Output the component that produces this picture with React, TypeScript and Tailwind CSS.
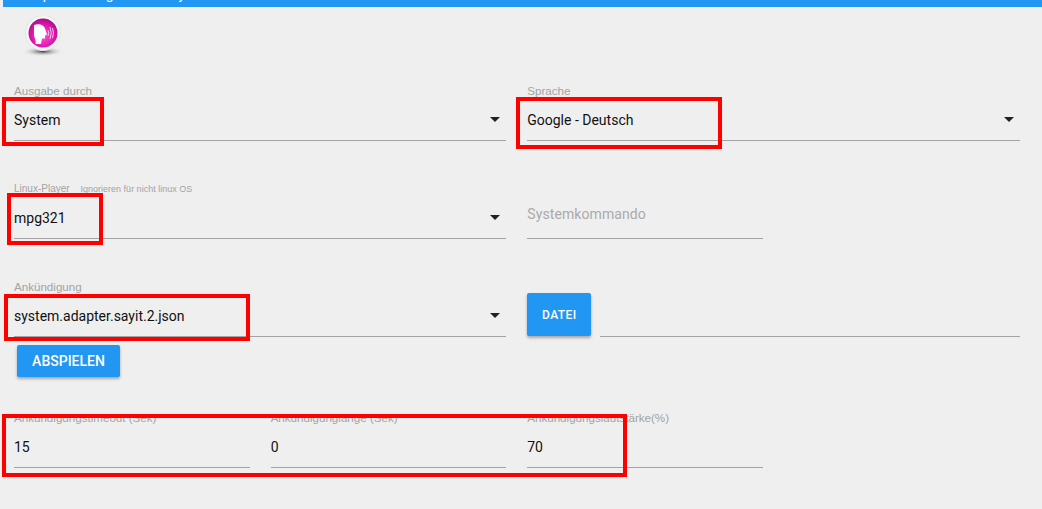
const labelCls = "block font-['Liberation_Sans',sans-serif] text-[11.6px] leading-[14px] text-[#a3a3a3] whitespace-nowrap";

const Field = ({
  label,
  value,
  hint,
  select,
  className = "",
}: {
  label?: string;
  value?: string;
  hint?: string;
  select?: boolean;
  className?: string;
}) => (
  <div className={"relative flex h-[59px] flex-col border-b border-[#a3a3a3] " + className}>
    <div className="flex h-[16px] items-end gap-[11px] pt-[2px]">
      {hint ? (
        <span className="font-['Liberation_Sans',sans-serif] text-[10px] leading-[14px] text-[#a3a3a3] whitespace-nowrap">{label}</span>
      ) : (
        <span className={labelCls}>{label}</span>
      )}
      {hint && <span className="font-['Liberation_Sans',sans-serif] text-[9px] leading-[14px] text-[#a3a3a3] whitespace-nowrap">{hint}</span>}
    </div>
    <div className="pt-[13px] text-[14px] leading-[18px] text-[#111111]">{value}</div>
    {select && (
      <div className="absolute top-[35px] right-[6px] h-0 w-0 border-x-[5px] border-t-[5px] border-x-transparent border-t-[#222222]" />
    )}
  </div>
);

const Logo = () => (
  <svg width="42" height="42" viewBox="0 0 42 42">
    <defs>
      <radialGradient id="ball" cx="50%" cy="60%" r="60%">
        <stop offset="0%" stopColor="#fb5ad0" />
        <stop offset="65%" stopColor="#e015ac" />
        <stop offset="100%" stopColor="#a80c85" />
      </radialGradient>
      <radialGradient id="shadow" cx="50%" cy="50%" r="50%">
        <stop offset="0%" stopColor="#444444" />
        <stop offset="100%" stopColor="#efefef" stopOpacity="0" />
      </radialGradient>
    </defs>
    <ellipse cx="21" cy="35.5" rx="21" ry="5" fill="url(#shadow)" />
    <circle cx="21" cy="17" r="17.5" fill="#f7f7f7" stroke="#e2e2e2" />
    <circle cx="21" cy="17" r="14.5" fill="url(#ball)" />
    <path d="M12 9c5-1.500 10-.5 11.500 5l1.500 4.500-2 1 0 3-3 0-1 5.500-5.500 0c1-4-1.500-6-1.500-10 0-3 0-6 0-9z" fill="#ffffff" />
    <path d="M26 14q1.500 3 0 6M28 11q2.500 6 0 12M30.500 12q2 5 0 10" stroke="#f8c4e8" strokeWidth="1" fill="none" />
  </svg>
);

const App = () => {
  return (
    <div className="relative h-[509px] w-[1042px] overflow-hidden bg-[#efefef] font-['Roboto','Liberation_Sans',sans-serif]">
      <div className="ml-[3px] h-[7px] overflow-hidden bg-[#2196f3]">
        <div className="mt-[-15px] pl-[15px] text-[14px] leading-[18px] text-white">Adapter settings of the sayit</div>
      </div>
      <div className="pl-[22px] pt-[9px]">
        <Logo />
      </div>

      <div className="mt-[24px] grid grid-cols-4 gap-x-[21px] pr-[22.5px] pl-[14px]">
        <Field label="Ausgabe durch" value="System" select className="col-span-2" />
        <Field label="Sprache" value="Google - Deutsch" select className="col-span-2" />

        <Field label="Linux-Player" hint="Ignorieren für nicht linux OS" value="mpg321" select className="col-span-2 mt-[39px]" />
        <div className="mt-[39px] flex h-[59px] items-start border-b border-[#a3a3a3] pt-[25px] text-[14px] leading-[18px] tracking-[0.1px] text-[#aaaaaa]">Systemkommando</div>
        <div />

        <Field label="Ankündigung" value="system.adapter.sayit.2.json" select className="col-span-2 mt-[39px]" />
        <div className="col-span-2 mt-[39px] flex h-[59px] items-end">
          <button className="mb-[1px] h-[43px] w-[64px] shrink-0 rounded-[2px] bg-[#2196f3] text-[12px] font-medium tracking-[0.4px] text-white shadow-[0_2px_3px_rgba(0,0,0,0.3)]">DATEI</button>
          <div className="ml-[9px] flex-1 border-b border-[#a3a3a3]" />
        </div>

        <div className="col-span-4 pl-[3px] pt-[8px]">
          <button className="h-[32px] w-[103px] rounded-[2px] bg-[#2196f3] text-[14px] font-medium text-white shadow-[0_2px_3px_rgba(0,0,0,0.3)]">ABSPIELEN</button>
        </div>

        <Field label="Ankündigungstimeout (Sek)" value="15" className="mt-[32px]" />
        <Field label="Ankündigunglänge (Sek)" value="0" className="mt-[32px]" />
        <Field label="Ankündigungslautstärke(%)" value="70" className="mt-[32px]" />
      </div>

      {/* red markers drawn over the screenshot */}
      <div className="absolute top-[97px] left-[2px] h-[49px] w-[102px] border-4 border-[#ff0000]" />
      <div className="absolute top-[97px] left-[516px] h-[52px] w-[206px] border-4 border-[#ff0000]" />
      <div className="absolute top-[193px] left-[7px] h-[52px] w-[96px] border-4 border-[#ff0000]" />
      <div className="absolute top-[294px] left-[4px] h-[47px] w-[246px] border-4 border-[#ff0000]" />
      <div className="absolute top-[414px] left-[2px] h-[63px] w-[625px] border-4 border-[#ff0000]" />
    </div>
  );
};

export default App;
